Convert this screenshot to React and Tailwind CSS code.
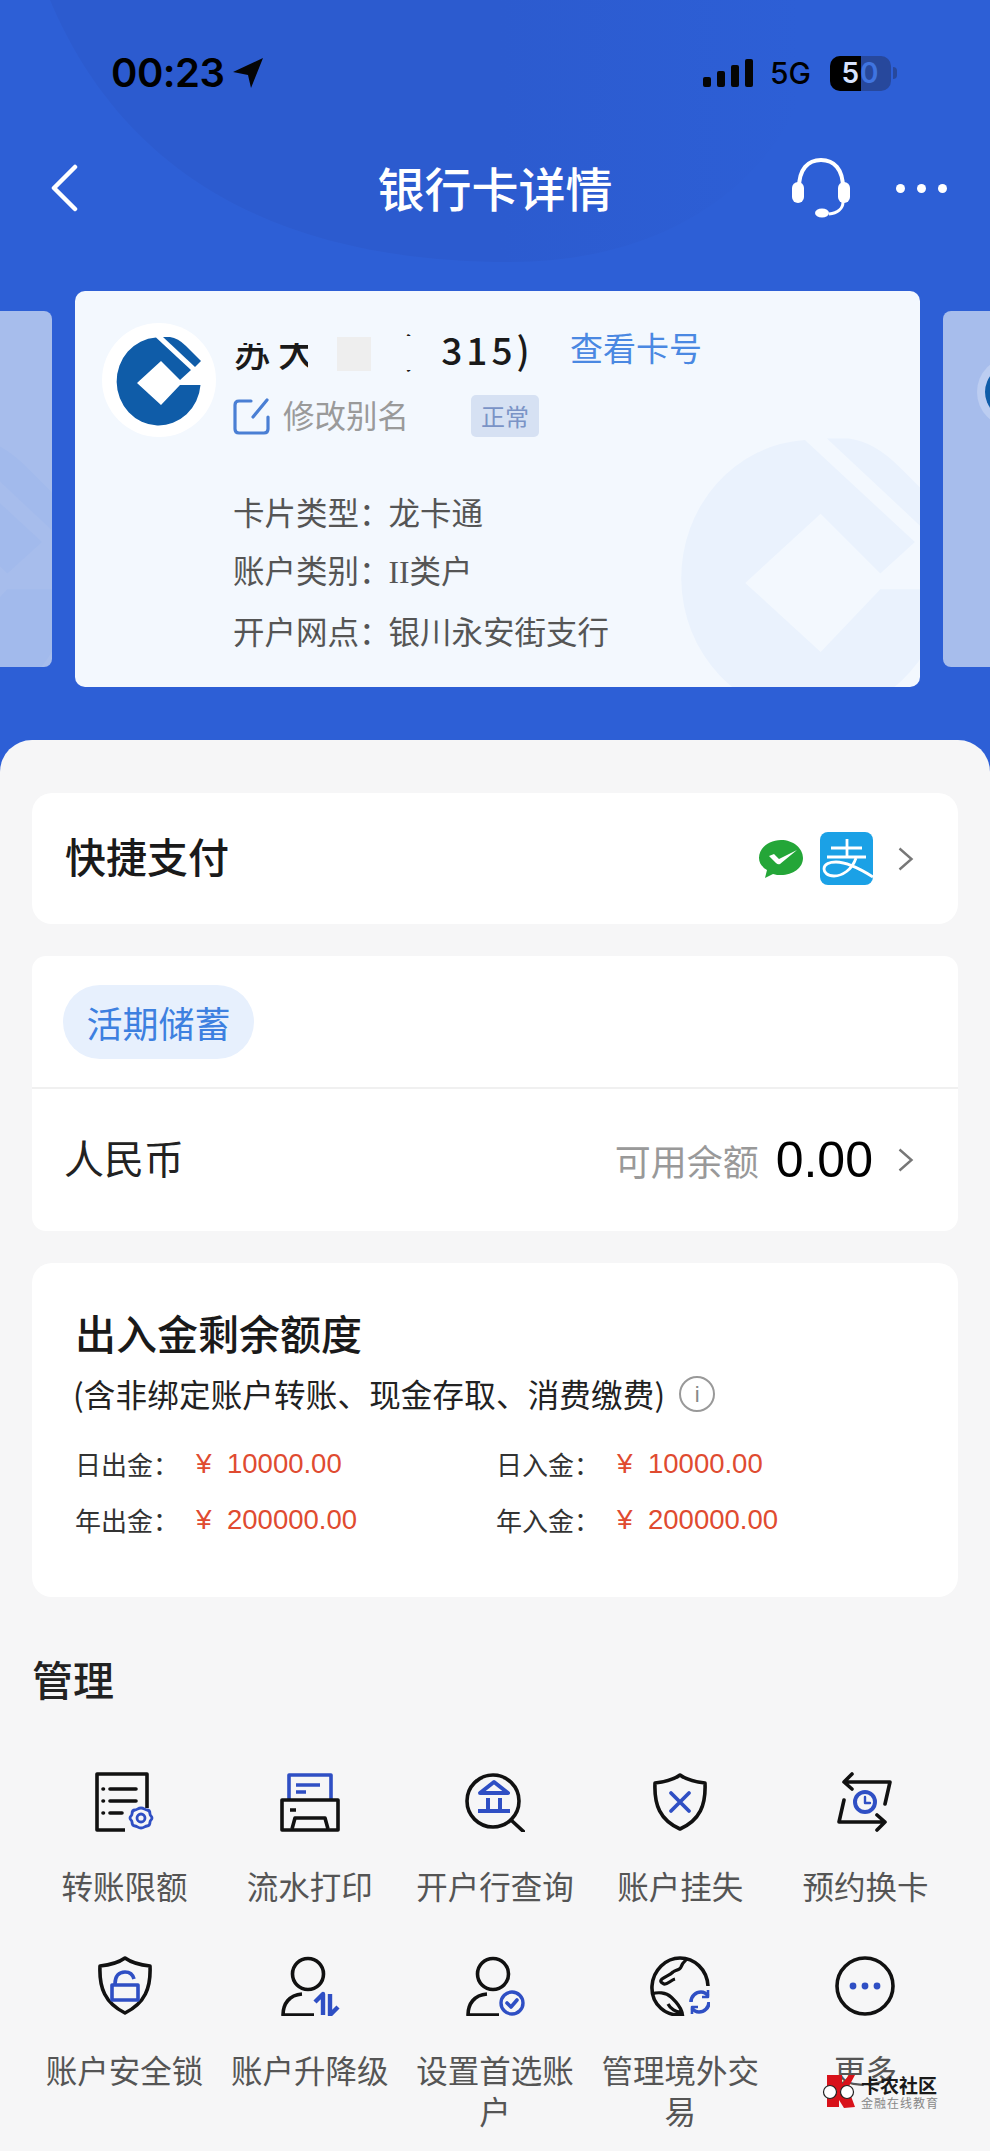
const BK = '#111111'
const BL = '#2f4fc4'

// bank mark, drawn in a 120 box
function CcbMark({ className, fill = '#0f5ca8', disc }) {
  return (
    <svg viewBox="0 0 120 120" className={className} fill={fill}>
      {disc && <circle cx="59" cy="60" r="57" fill={disc} />}
      <path d="M56 17.500A42 44 0 1 0 100.500 65H80L61 85 37 63 61 41 80 60 91 50Z" />
      <path d="M63 17h7q8 1 16 9l15 15-6 6z" />
    </svg>
  )
}

function Chevron() {
  return (
    <svg viewBox="0 0 16 24" className="w-[16px] h-[24px]" fill="none" stroke="#777" strokeWidth="2.400">
      <path d="M1.500 1.500l12 10.500-12 10.500" />
    </svg>
  )
}

function GridIcon({ children }) {
  return (
    <svg viewBox="0 0 60 60" className="w-[60px] h-[60px]" fill="none" stroke={BK} strokeWidth="3.600" strokeLinecap="round" strokeLinejoin="round">
      {children}
    </svg>
  )
}

const icons = {
  limit: (
    <GridIcon>
      <path d="M52 36V2H2v56h28" strokeLinecap="butt" />
      <path d="M8 17h.5M8 29h.5M8 41h.5M15 17h26M15 29h26M15 41h12" />
      <g stroke={BL} strokeWidth="2.800">
        <circle cx="46" cy="46" r="4" />
        <path d="M46 36c3 0 4 2 6 2s3 2 3 4 2 2 2 4-2 2-2 4-1 4-3 4-3 2-6 2-4-2-6-2-3-2-3-4-2-2-2-4 2-2 2-4 1-4 3-4 3-2 6-2z" />
      </g>
    </GridIcon>
  ),
  print: (
    <GridIcon>
      <g stroke={BL} strokeLinecap="butt">
        <path d="M9 27V3h42v24" />
        <path d="M16 13h24M16 20h10" />
      </g>
      <path d="M2 28h56v30H2z" />
      <path d="M12 57l3-11h30l3 11M10 38h6" strokeLinecap="butt" />
    </GridIcon>
  ),
  bank: (
    <GridIcon>
      <circle cx="28" cy="29" r="26" />
      <path d="M46 48l13 12" />
      <g stroke={BL} strokeLinecap="butt" strokeWidth="4">
        <path d="M15 21l14-11 14 11zM23 26v11M35 26v11M13 39h32" />
      </g>
    </GridIcon>
  ),
  shieldX: (
    <GridIcon>
      <path d="M30 3c7 5 15 7 25 8 1 22-5 37-25 46C10 48 4 33 5 11c10-1 18-3 25-8z" />
      <path d="M21 21l18 18M39 21L21 39" stroke={BL} strokeWidth="3.800" />
    </GridIcon>
  ),
  swap: (
    <GridIcon>
      <path d="M17 2l-8 8 8 7M9 10h46l-5 22" />
      <path d="M42 58l8-8-8-7M50 50H4l5-22" />
      <g stroke={BL}>
        <circle cx="30" cy="30" r="10" strokeWidth="4" />
        <path d="M30 25v6h5" strokeWidth="2.400" />
      </g>
    </GridIcon>
  ),
  shieldLock: (
    <GridIcon>
      <path d="M30 2c7 5 15 7 25 8 1 22-5 37-25 47C10 47 4 32 5 10c10-1 18-3 25-8z" />
      <g stroke={BL} strokeLinecap="butt">
        <path d="M17 29h26v15H17z" />
        <path d="M20 28c0-8 4-12 10-12 5 0 8 3 9 7" />
      </g>
    </GridIcon>
  ),
  upDown: (
    <GridIcon>
      <circle cx="28" cy="18" r="15.500" />
      <path d="M34 59H3c0-11 6-20 19-21" strokeLinecap="butt" />
      <g stroke={BL} strokeWidth="4.400" strokeLinecap="butt">
        <path d="M43 59V38l-8 8M50 38v21l8-8" />
      </g>
    </GridIcon>
  ),
  userOk: (
    <GridIcon>
      <circle cx="28" cy="18" r="15.500" />
      <path d="M34 59H3c0-11 6-20 19-21" strokeLinecap="butt" />
      <g stroke={BL}>
        <circle cx="47" cy="47" r="11" strokeWidth="3.400" />
        <path d="M42 47l4 4 6-7" />
      </g>
    </GridIcon>
  ),
  globe: (
    <GridIcon>
      <path d="M34 58C16 62 1 48 2 30 3 14 16 2 30 2c14 0 27 11 28 28" strokeLinecap="butt" />
      <path d="M37 3c-2 2-5 4-6 8-1 3-5 3-8 5-3 3-7 4-11 7-2 2-2 3 2 5 3 1 7-4 11-5M2 38c5-2 14-2 19 3 3 3 8 7 11 15-6 1-12-4-14-8" strokeLinecap="butt" strokeWidth="3.200" />
      <g stroke={BL} strokeWidth="3.600" strokeLinecap="butt">
        <path d="M41 46c0-6 5-10 10-10 3 0 5 1 7 4M59 46c0 6-5 10-10 10-3 0-5-1-7-4" />
        <path d="M58 34v7h-6M42 58v-7h6" strokeWidth="2.600" />
      </g>
    </GridIcon>
  ),
  more: (
    <GridIcon>
      <circle cx="30" cy="30" r="28" />
      <g fill={BL} stroke="none">
        <circle cx="18" cy="30" r="3.400" />
        <circle cx="30" cy="30" r="3.400" />
        <circle cx="42" cy="30" r="3.400" />
      </g>
    </GridIcon>
  ),
}

const actions = [
  ['limit', '转账限额'],
  ['print', '流水打印'],
  ['bank', '开户行查询'],
  ['shieldX', '账户挂失'],
  ['swap', '预约换卡'],
  ['shieldLock', '账户安全锁'],
  ['upDown', '账户升降级'],
  ['userOk', '设置首选账户'],
  ['globe', '管理境外交易'],
  ['more', '更多'],
]

function StatusBar() {
  return (
    <div className="h-[146px] pl-[111px] pr-[93px] flex items-center justify-between text-black font-['Inter']">
      <div className="flex items-center gap-[9px]">
        <span className="text-[40px] font-semibold leading-none tracking-[-0.5px]">00:23</span>
        <svg viewBox="0 0 30 30" className="w-[30px] h-[30px]" fill="#050505">
          <path d="M30 0L18 30l-3-13L0 14z" />
        </svg>
      </div>
      <div className="flex items-center">
        <svg viewBox="0 0 50 28" className="w-[50px] h-[28px] mr-[17px]" fill="#050505">
          <rect x="0" y="18" width="8" height="10" rx="2" />
          <rect x="14" y="12" width="8" height="16" rx="2" />
          <rect x="28" y="6" width="8" height="22" rx="2" />
          <rect x="42" y="0" width="8" height="28" rx="2" />
        </svg>
        <span className="text-[30px] font-medium leading-none mr-[19px]">5G</span>
        <div className="relative w-[61px] h-[35px] rounded-[10px] overflow-hidden bg-[#27489c] flex">
          <div className="w-[31px] bg-black" />
          <span className="absolute inset-0 flex items-center justify-center text-[28px] font-semibold leading-none tracking-[1px]">
            <span className="text-[#d8e4ff]">5</span>
            <span className="text-[#3f74e0]">0</span>
          </span>
        </div>
        <div className="w-[4px] h-[12px] ml-[2px] rounded-r-full bg-[#27489c]" />
      </div>
    </div>
  )
}

function NavBar() {
  return (
    <div className="h-[84px] pl-[50px] pr-[43px] flex items-center justify-between relative">
      <svg viewBox="0 0 28 48" className="w-[28px] h-[48px]" fill="none" stroke="#fff" strokeWidth="4.500" strokeLinecap="round" strokeLinejoin="round">
        <path d="M25 3L4 24l21 21" />
      </svg>
      <div className="absolute inset-0 flex items-center justify-center text-[47px] leading-none font-medium text-white">
        <span className="mb-[4px]">银行卡详情</span>
      </div>
      <div className="flex items-center gap-[45px] relative">
        <svg viewBox="0 0 60 60" className="w-[60px] h-[60px]" fill="none" stroke="#fff" strokeWidth="4">
          <path d="M8 30C8 11 17 2 30 2s22 9 22 28" />
          <rect x="1" y="24" width="12" height="21" rx="6" fill="#fff" stroke="none" />
          <rect x="47" y="24" width="12" height="21" rx="6" fill="#fff" stroke="none" />
          <path d="M52 44c0 7-6 11-14 12" strokeWidth="3" />
          <ellipse cx="31" cy="55" rx="7" ry="4.500" fill="#fff" stroke="none" />
        </svg>
        <div className="flex gap-[12px]">
          <div className="w-[9px] h-[9px] rounded-full bg-white" />
          <div className="w-[9px] h-[9px] rounded-full bg-white" />
          <div className="w-[9px] h-[9px] rounded-full bg-white" />
        </div>
      </div>
    </div>
  )
}

function CardInfo() {
  return (
    <div className="relative flex-none w-[845px] h-[396px] rounded-[10px] overflow-hidden bg-[#f3f8fe]">
      <CcbMark className="absolute left-[554px] top-[94px] w-[377px] h-[377px]" fill="#eaf2fd" />
      <CcbMark className="absolute left-[25px] top-[29px] w-[120px] h-[120px]" disc="#ffffff" />
      <div className="relative pl-[158px] pt-[39px] text-[31.500px] text-[#555]">
        <div className="flex items-center h-[40px]">
          {/* masked account name, the screenshot has it scrubbed */}
          <div className="relative w-[300px] h-[40px] text-[38px] leading-[40px] text-[#1a1a1a]">
            <span className="absolute left-0 top-0 font-medium tracking-[7px] whitespace-nowrap">苏大宝</span>
            <span className="absolute left-[166px] -top-[1px] font-medium text-[37px] tracking-[4px] whitespace-nowrap">(2315)</span>
            <div className="absolute left-0 top-[3px] w-[162px] h-[10px] bg-[#f3f8fe]" />
            <div className="absolute left-[75px] top-[5px] w-[90px] h-[38px] bg-[#f3f8fe]" />
            <div className="absolute left-[160px] top-[6px] w-[47px] h-[34px] bg-[#f3f8fe]" />
            <div className="absolute left-[104px] top-[7px] w-[34px] h-[34px] bg-[#eeeeee]" />
          </div>
          <span className="ml-[37px] mb-[6px] text-[33px] leading-none text-[#4a88e2]">查看卡号</span>
        </div>
        <div className="flex items-center h-[42px] mt-[25px]">
          <svg viewBox="0 0 37 37" className="w-[37px] h-[37px]" fill="none" stroke="#4a7fd4" strokeWidth="3.200" strokeLinecap="round" strokeLinejoin="round">
            <path d="M18 3H6Q2 3 2 7v24q0 4 4 4h25q4 0 4-4V19" />
            <path d="M34 2L20 19" />
          </svg>
          <span className="ml-[13px] mb-[2px] leading-none text-[#9a9a9a]">修改别名</span>
          <span className="ml-[62px] w-[68px] h-[42px] rounded-[5px] bg-[#d6e1f3] text-[24px] text-[#7a93c6] flex items-center justify-center">正常</span>
        </div>
        <div className="mt-[58px] flex flex-col gap-[25.500px] leading-[32px]">
          <div>卡片类型：<span className="-ml-[2px]">龙卡通</span></div>
          <div>账户类别：<span className="-ml-[2px]"><span className="font-['Liberation_Serif']">II</span>类户</span></div>
          <div>开户网点：<span className="-ml-[2px]">银川永安街支行</span></div>
        </div>
      </div>
    </div>
  )
}

function PeekCard({ side }) {
  return (
    <div className={`relative flex-none h-[356px] overflow-hidden bg-[#a7bdec] ${side === 'left' ? 'w-[52px] rounded-r-[8px]' : 'w-[47px] rounded-l-[8px]'}`}>
      {side === 'left' ? (
        <CcbMark className="absolute -left-[244px] top-[74px] w-[377px] h-[377px]" fill="#a2baec" />
      ) : (
        <div className="absolute left-[34px] top-[46px] w-[70px] h-[70px] rounded-full bg-[#bccdf1] flex items-center justify-center">
          <div className="w-[54px] h-[54px] rounded-full bg-[#0f5ca8]" />
        </div>
      )}
    </div>
  )
}

function WeChatMark() {
  return (
    <svg viewBox="0 0 46 40" className="w-[46px] h-[40px]">
      <path d="M23 1c12 0 22 8 22 18S35 36 23 36c-3 0-5 0-8-1l-8 4 2-8C4 28 1 24 1 19 1 9 11 1 23 1z" fill="#24a638" />
      <path d="M11 17l5-2 5 5 18-9-17 14q-2 1-4-1z" fill="#fff" />
    </svg>
  )
}

function AlipayMark() {
  return (
    <div className="w-[53px] h-[53px] rounded-[8px] bg-[#1ba1e6] overflow-hidden">
      <svg viewBox="0 0 53 53" className="w-full h-full" fill="none" stroke="#fff" strokeWidth="2.800">
        <path d="M11 16h31M27 7v18M7 25h39" />
        <path d="M36 26C32 38 22 44 14 44 7 44 4 40 4 37c0-5 6-7 12-7 10 0 26 8 37 15" />
      </svg>
    </div>
  )
}

function QuotaRow({ leftLabel, rightLabel, amount }) {
  return (
    <div className="flex text-[26px] leading-[32px]">
      {[leftLabel, rightLabel].map(label => (
        <div key={label} className="flex items-center w-[421px]">
          <span className="w-[121px] text-[#333]">{label}</span>
          <span className="w-[31px] font-['Liberation_Sans'] text-[28px] text-[#e04b30]">¥</span>
          <span className="font-['Liberation_Sans'] text-[27.500px] text-[#e04b30]">{amount}</span>
        </div>
      ))}
    </div>
  )
}

export default function App() {
  return (
    <div className="relative h-[2151px] overflow-hidden bg-[#2d5fd6] font-['Noto_Sans_CJK_SC',sans-serif]">
      <svg viewBox="0 0 990 740" className="absolute left-0 top-0 w-[990px] h-[740px]">
        <defs>
          <linearGradient id="arc" x1="0" y1="0" x2="1" y2="0">
            <stop offset="0.6" stopColor="#2c5bcf" />
            <stop offset="1" stopColor="#2d5fd6" />
          </linearGradient>
        </defs>
        <path d="M50 0C130 190 300 262 510 262 660 262 760 190 800 100V0z" fill="url(#arc)" />
      </svg>
      <div className="relative">
        <StatusBar />
        <NavBar />
        <div className="mt-[61px] flex items-center justify-between">
          <PeekCard side="left" />
          <CardInfo />
          <PeekCard side="right" />
        </div>
      </div>

      <div className="relative mt-[53px] h-[1411px] rounded-t-[32px] bg-[#f6f6f7] px-[32px] pt-[53px]">
        <div className="h-[131px] rounded-[20px] bg-white pl-[33px] pr-[44px] flex items-center justify-between">
          <span className="mb-[6px] text-[41px] font-medium text-[#1a1a1a]">快捷支付</span>
          <div className="flex items-center">
            <WeChatMark />
            <div className="ml-[16px]"><AlipayMark /></div>
            <div className="ml-[25px]"><Chevron /></div>
          </div>
        </div>

        <div className="mt-[32px] h-[275px] rounded-[14px] bg-white overflow-hidden">
          <div className="h-[133px] pl-[31px] flex items-center border-b-[2px] border-[#f0f0f0]">
            <div className="w-[191px] h-[74px] rounded-full bg-[#e7f0fd] text-[36px] text-[#3d80e0] flex items-center justify-center">活期储蓄</div>
          </div>
          <div className="h-[142px] pl-[32px] pr-[44px] flex items-center justify-between">
            <span className="mb-[6px] text-[40px] text-[#222]">人民币</span>
            <div className="flex items-center">
              <span className="text-[36px] text-[#999]">可用余额</span>
              <span className="ml-[17px] text-[50px] leading-none font-['Liberation_Sans'] text-black">0.00</span>
              <div className="ml-[25px]"><Chevron /></div>
            </div>
          </div>
        </div>

        <div className="mt-[32px] h-[334px] rounded-[20px] bg-white pl-[43px] pt-[41px]">
          <div className="text-[41px] leading-[56px] font-medium text-[#1a1a1a]">出入金剩余额度</div>
          <div className="-ml-[2px] mt-[12px] flex items-center h-[44px]">
            <span className="text-[31.500px] tracking-[0.2px] text-[#222]">(含非绑定账户转账、现金存取、消费缴费)</span>
            <div className="ml-[14px] w-[36px] h-[36px] rounded-full border-[2.500px] border-[#999] text-[#888] text-[22px] flex items-center justify-center font-['Liberation_Sans']">i</div>
          </div>
          <div className="mt-[32px] flex flex-col gap-[24px]">
            <QuotaRow leftLabel="日出金：" rightLabel="日入金：" amount={'10000.00'} />
            <QuotaRow leftLabel="年出金：" rightLabel="年入金：" amount={'200000.00'} />
          </div>
        </div>

        <div className="mt-[53px] text-[41px] leading-[56px] font-medium text-[#222]">管理</div>

        <div className="mt-[66px] grid grid-cols-5 gap-y-[50px]">
          {actions.map(([key, label]) => (
            <div key={key} className="flex flex-col items-center">
              {icons[key]}
              <div className="mt-[33px] w-[175px] text-center text-[31.500px] leading-[41px] text-[#555]">{label}</div>
            </div>
          ))}
        </div>
      </div>

      <div className="absolute left-[822px] top-[2074px] flex items-center">
        <svg viewBox="0 0 34 36" className="w-[34px] h-[36px]">
          <path d="M5 1h15v9l7-9h6l-7 13 7 19-11 1-5-8v7H5z" fill="#d8121a" />
          <circle cx="8" cy="18" r="6.500" fill="#fff" stroke="#222" strokeWidth="1.200" />
          <circle cx="25" cy="18" r="6.500" fill="#fff" stroke="#222" strokeWidth="1.200" />
        </svg>
        <div className="ml-[5px] flex flex-col w-[78px]">
          <span className="text-[19px] leading-[22px] font-bold text-[#1a1a1a] whitespace-nowrap">卡农社区</span>
          <span className="text-[12px] leading-[14px] text-[#888] whitespace-nowrap tracking-[1px]">金融在线教育</span>
        </div>
      </div>
    </div>
  )
}
